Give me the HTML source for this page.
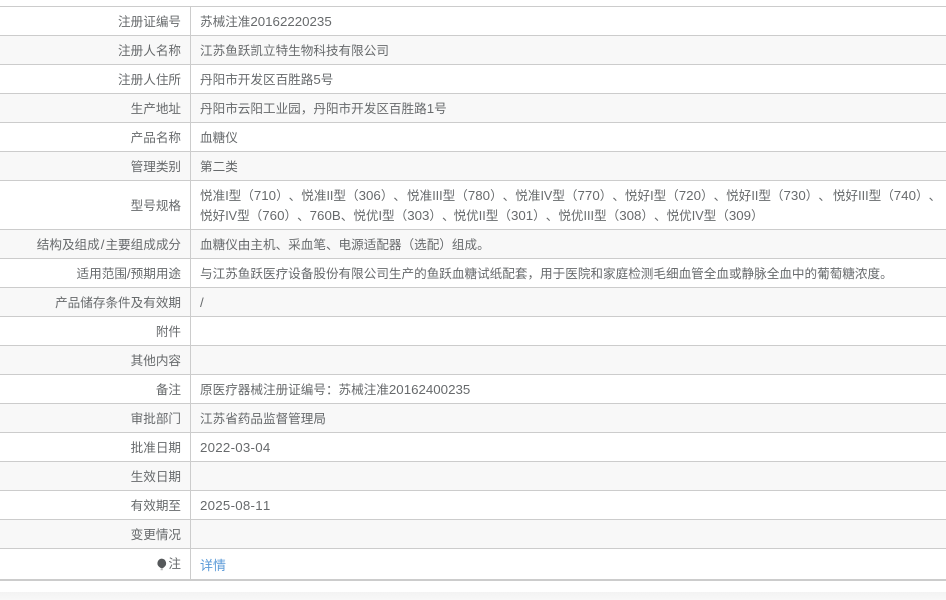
<!DOCTYPE html>
<html lang="zh"><head><meta charset="utf-8"><style>
html,body{margin:0;padding:0;background:#fff}
body{width:946px;height:600px;overflow:hidden;position:relative;font:12.6px/20px "Liberation Sans","Noto Sans CJK SC",sans-serif;color:#676a6c;text-spacing-trim:space-all;font-kerning:none}
.r{position:absolute;left:0;width:946px;border-top:1px solid #ccc;box-sizing:border-box}
.g{background:#f8f8f8}
.l{position:absolute;left:0;top:5px;width:181px;text-align:right;white-space:nowrap}
.v{position:absolute;left:200px;top:5px;width:746px;white-space:nowrap}
.b{position:absolute;left:190px;top:0;bottom:0;width:1px;background:#ccc}
.n{font-size:13.3px}
a{color:#5c9bd8;text-decoration:none;font-size:13px}
</style></head><body>
<div class="r" style="top:6px;height:29px"><div class="b"></div><div class="l">注册证编号</div><div class="v">苏械注准<span class="n">20162220235</span></div></div>
<div class="r g" style="top:35px;height:29px"><div class="b"></div><div class="l">注册人名称</div><div class="v">江苏鱼跃凯立特生物科技有限公司</div></div>
<div class="r" style="top:64px;height:29px"><div class="b"></div><div class="l">注册人住所</div><div class="v">丹阳市开发区百胜路<span class="n">5</span>号</div></div>
<div class="r g" style="top:93px;height:29px"><div class="b"></div><div class="l">生产地址</div><div class="v">丹阳市云阳工业园，丹阳市开发区百胜路<span class="n">1</span>号</div></div>
<div class="r" style="top:122px;height:29px"><div class="b"></div><div class="l">产品名称</div><div class="v">血糖仪</div></div>
<div class="r g" style="top:151px;height:29px"><div class="b"></div><div class="l">管理类别</div><div class="v">第二类</div></div>
<div class="r" style="top:180px;height:49px"><div class="b"></div><div class="l" style="top:15px">型号规格</div><div class="v" style="top:5px">悦准I型（<span class="n">710</span>）、悦准II型（<span class="n">306</span>）、<span style="margin-left:1px">悦准III型</span>（<span class="n">780</span>）、悦准IV型（<span class="n">770</span>）、悦好I型（<span class="n">720</span>）、悦好II型（<span class="n">730</span>）、<span style="margin-left:2px">悦好III型</span>（<span class="n">740</span>）、<br>悦好IV型（<span class="n">760</span>）、<span class="n">760B</span>、悦优I型（<span class="n">303</span>）、<span style="margin-left:-1px">悦优II型</span>（<span class="n">301</span>）、悦优III型（<span class="n">308</span>）、悦优IV型（<span class="n">309</span>）</div></div>
<div class="r g" style="top:229px;height:29px"><div class="b"></div><div class="l">结构及组成<span class="n" style="margin:0 1px">/</span>主要组成成分</div><div class="v">血糖仪由主机、采血笔、电源适配器（选配）组成。</div></div>
<div class="r" style="top:258px;height:29px"><div class="b"></div><div class="l">适用范围<span class="n">/</span>预期用途</div><div class="v">与江苏鱼跃医疗设备股份有限公司生产的鱼跃血糖试纸配套，用于医院和家庭检测毛细血管全血或静脉全血中的葡萄糖浓度。</div></div>
<div class="r g" style="top:287px;height:29px"><div class="b"></div><div class="l">产品储存条件及有效期</div><div class="v"><span class="n">/</span></div></div>
<div class="r" style="top:316px;height:29px"><div class="b"></div><div class="l">附件</div></div>
<div class="r g" style="top:345px;height:29px"><div class="b"></div><div class="l">其他内容</div></div>
<div class="r" style="top:374px;height:29px"><div class="b"></div><div class="l">备注</div><div class="v">原医疗器械注册证编号：苏械注准<span class="n">20162400235</span></div></div>
<div class="r g" style="top:403px;height:29px"><div class="b"></div><div class="l">审批部门</div><div class="v">江苏省药品监督管理局</div></div>
<div class="r" style="top:432px;height:29px"><div class="b"></div><div class="l">批准日期</div><div class="v"><span class="n" style="letter-spacing:.25px">2022-03-04</span></div></div>
<div class="r g" style="top:461px;height:29px"><div class="b"></div><div class="l">生效日期</div></div>
<div class="r" style="top:490px;height:29px"><div class="b"></div><div class="l">有效期至</div><div class="v"><span class="n" style="letter-spacing:.25px">2025-08-11</span></div></div>
<div class="r g" style="top:519px;height:29px"><div class="b"></div><div class="l">变更情况</div></div>
<div class="r" style="top:548px;height:31px"><div class="b"></div><div class="l" style="top:5px">注</div><div class="v" style="top:7px"><a>详情</a></div>
<svg style="position:absolute;left:156px;top:9px" width="11" height="13" viewBox="0 0 11 13"><path d="M5.8 .6a4.7 4.7 0 0 1 2.2 8.6L6.6 10.4H5.2L3 8.8A4.7 4.7 0 0 1 5.8 .6z" fill="#55585a"/><rect x="4.6" y="11.2" width="2.2" height="1" fill="#aaa"/></svg></div>
<div style="position:absolute;left:0;top:579px;width:946px;height:2px;background:#ccc"></div>
<div style="position:absolute;left:0;top:592px;width:946px;height:8px;background:linear-gradient(#f3f3f3,#f8f8f8)"></div>
</body></html>
